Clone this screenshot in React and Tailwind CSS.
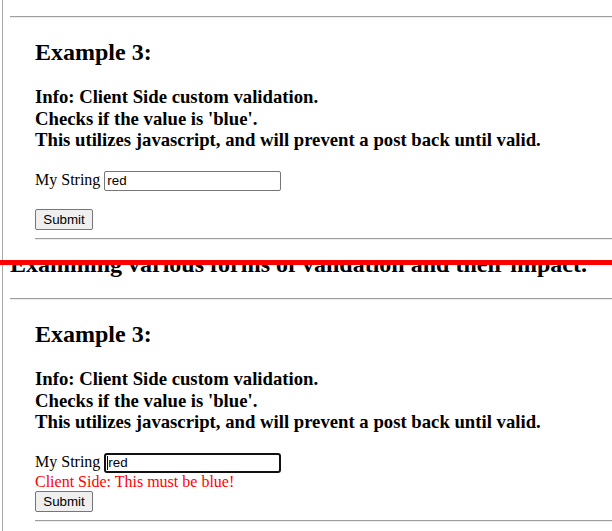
import React from 'react';

const serif = "font-['Liberation_Serif','Times_New_Roman',serif]";
const sans = "font-['Liberation_Sans',Arial,sans-serif]";

const Rule = ({ className = '' }) => (
  <div className={`h-[2px] border-t border-[#9e9e9e] border-b border-b-[#ececec] ${className}`} />
);

const ExampleThree = ({ invalid }) => (
  <div className="pl-[32px]">
    <h2 className="mt-[21px] text-[24px] font-bold leading-[27px]">Example 3:</h2>
    <h3 className="mt-[20px] text-[18.72px] font-bold leading-[21.5px]">
      Info: Client Side custom validation.
      <br />
      Checks if the value is 'blue'.
      <br />
      This utilizes javascript, and will prevent a post back until valid.
    </h3>
    <form onSubmit={(e) => e.preventDefault()}>
      <div className="mt-[20px] flex items-start gap-[4px] text-[16px]">
        <label className="leading-[18px]">My String</label>
        {invalid ? (
          <div
            className={`flex h-[20px] w-[177px] items-center rounded-[3px] border-2 border-[#111111] px-[1px] text-[13.33px] ${sans}`}
          >
            <span className="inline-block h-[14px] w-[1px] bg-black" />
            <span>red</span>
          </div>
        ) : (
          <input
            type="text"
            defaultValue="red"
            className={`h-[20px] w-[177px] rounded-[2px] border border-[#767676] px-[2px] text-[13.33px] text-black outline-none ${sans}`}
          />
        )}
      </div>
      {invalid && (
        <p className="text-[16px] leading-[18px] text-[#ff0000]">Client Side: This must be blue!</p>
      )}
      <button
        type="submit"
        className={`${invalid ? 'mt-0' : 'mt-[18px]'} block h-[21px] w-[58px] rounded-[2px] border border-[#767676] bg-[#efefef] text-[13.33px] leading-[19px] text-black ${sans}`}
      >
        Submit
      </button>
    </form>
    <Rule className="mt-[8px]" />
  </div>
);

const App = () => {
  return (
    <div className={`h-[531px] w-[612px] overflow-hidden bg-white text-black ${serif}`}>
      {/* first capture */}
      <div className="ml-[2px] h-[260px] overflow-hidden border-l border-[#a8a8a8]">
        <Rule className="ml-[7px] mt-[16px]" />
        <ExampleThree />
      </div>

      <div className="h-[5px] bg-[#ff0000]" />

      {/* second capture, after failed validation */}
      <div className="ml-[2px] h-[266px] overflow-hidden border-l border-[#a8a8a8]">
        <h2 className="-mt-[14px] whitespace-nowrap pl-[7px] text-[24px] font-bold leading-[27px]">
          Examining various forms of validation and their impact.
        </h2>
        <Rule className="ml-[7px] mt-[20px]" />
        <ExampleThree invalid />
      </div>
    </div>
  );
};

export default App;
